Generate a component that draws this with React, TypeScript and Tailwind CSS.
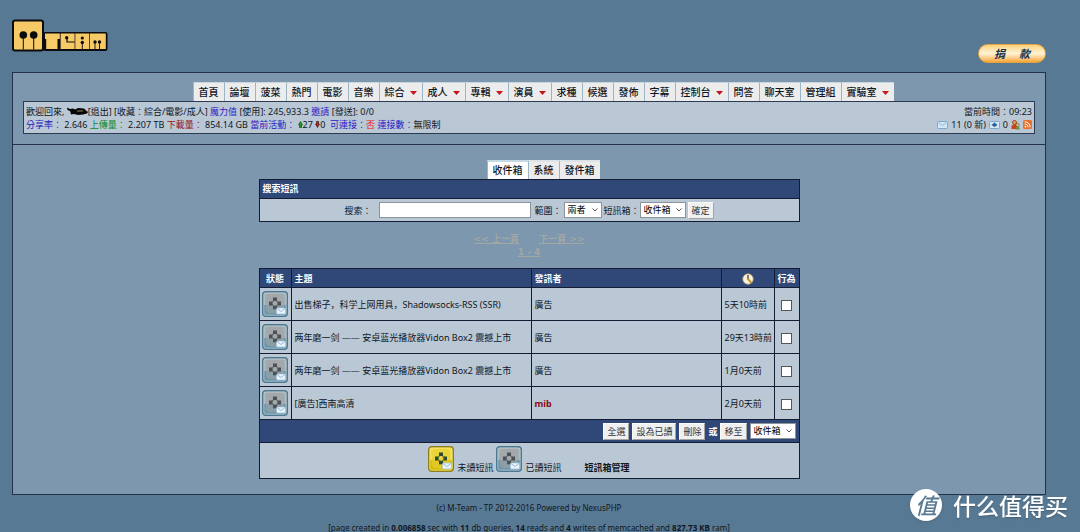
import { useState } from "react";
import type { ReactNode } from "react";

const NAV = [
  { label: "首頁" },
  { label: "論壇" },
  { label: "菠菜" },
  { label: "熱門" },
  { label: "電影" },
  { label: "音樂" },
  { label: "綜合", menu: true },
  { label: "成人", menu: true },
  { label: "專輯", menu: true },
  { label: "演員", menu: true },
  { label: "求種" },
  { label: "候選" },
  { label: "發佈" },
  { label: "字幕" },
  { label: "控制台", menu: true },
  { label: "問答" },
  { label: "聊天室" },
  { label: "管理組" },
  { label: "實驗室", menu: true },
];

const TABS = ["收件箱", "系統", "發件箱"];

const MESSAGES = [
  { id: 1, subject: "出售梯子，科学上网用具，Shadowsocks-RSS (SSR)", sender: "廣告", time: "5天10時前" },
  { id: 2, subject: "两年磨一剑 —— 安卓蓝光播放器Vidon Box2 震撼上市", sender: "廣告", time: "29天13時前" },
  { id: 3, subject: "两年磨一剑 —— 安卓蓝光播放器Vidon Box2 震撼上市", sender: "廣告", time: "1月0天前" },
  { id: 4, subject: "[廣告]西南高清", sender: "mib", staff: true, time: "2月0天前" },
];

function Logo() {
  return (
    <svg width="96" height="33" viewBox="0 0 96 33" role="img" aria-label="MTeam">
      <rect x="31" y="13" width="64.500" height="19" rx="2" fill="#0c0c0e" />
      <rect x="0" y="0.500" width="32" height="32" rx="3" fill="#0c0c0e" />
      <rect x="2" y="2.500" width="28" height="28" rx="1" fill="#f5ca67" />
      <circle cx="11.300" cy="16" r="3.800" fill="#0c0c0e" />
      <circle cx="21.700" cy="16" r="3.800" fill="#0c0c0e" />
      <path d="M11.300 16v14.500M21.700 16v14.500" stroke="#0c0c0e" strokeWidth="1" />
      <rect x="33" y="14.500" width="14.800" height="15.500" fill="#f5ca67" />
      <rect x="32" y="20" width="2.200" height="10" fill="#0c0c0e" />
      <rect x="45.500" y="20" width="2.500" height="10" fill="#0c0c0e" />
      <rect x="48.600" y="14.500" width="14" height="15.500" fill="#f5ca67" />
      <rect x="63.300" y="14.500" width="14" height="15.500" fill="#f5ca67" />
      <rect x="78" y="14.500" width="15.800" height="15.500" fill="#f5ca67" />
      <circle cx="54.700" cy="18.700" r="1.700" fill="#0c0c0e" />
      <path d="M55 18.700v4.300h7.600" fill="none" stroke="#0c0c0e" strokeWidth="1.200" />
      <circle cx="70.300" cy="19" r="1.600" fill="#0c0c0e" />
      <circle cx="70.300" cy="23.500" r="1.700" fill="#0c0c0e" />
      <path d="M70.300 23v7M83 23v7M87.500 23v7" stroke="#0c0c0e" strokeWidth="0.900" />
      <circle cx="83" cy="23" r="1.700" fill="#0c0c0e" />
      <circle cx="87.500" cy="23" r="1.700" fill="#0c0c0e" />
    </svg>
  );
}

function MailIcon({ unread = false }: { unread?: boolean }) {
  const top = unread ? "#efdc45" : "#a5b0b6";
  const bottom = unread ? "#d9bd0c" : "#6f97aa";
  const edge = unread ? "#8d7d1c" : "#4b7890";
  const ink = unread ? "#2f4a32" : "#4d5054";
  return (
    <svg
      width="26"
      height="26"
      viewBox="0 0 26 26"
      role="img"
      aria-label={unread ? "未讀" : "已讀"}
      className="inline-block align-middle"
    >
      <rect x="0.700" y="0.700" width="24.600" height="24.600" rx="3" fill={top} stroke={edge} strokeWidth="1.4" />
      <path d="M1.500 14h23v8.500a2 2 0 0 1-2 2h-19a2 2 0 0 1-2-2z" fill={bottom} />
      <rect x="4" y="3" width="18" height="19" rx="4" fill={unread ? "#e6cf35" : "#a0a3a4"} opacity="0.6" />
      <rect x="1.900" y="1.900" width="22.200" height="22.200" rx="2" fill="none" stroke="#ffffff" strokeOpacity="0.3" />
      <path d="M13 8.300L17 12.300 13 16.300 9 12.300z" fill="none" stroke={ink} strokeOpacity="0.6" strokeWidth="1.2" />
      <g fill={ink}>
        <rect x="11" y="6.500" width="4" height="3.500" />
        <rect x="7" y="10.500" width="3.500" height="4" />
        <rect x="15.500" y="10.500" width="3.500" height="4" />
        <rect x="11" y="14.800" width="4" height="3.500" />
      </g>
      <rect x="14.500" y="17" width="9" height="6" rx="1" fill="#eaf3fb" stroke="#9cc0dc" strokeWidth="0.6" />
      <path d="M15 17.500l4 3 4-3" fill="none" stroke="#8fb4d6" strokeWidth="0.9" />
    </svg>
  );
}

function ClockIcon() {
  return (
    <svg width="12" height="12" viewBox="0 0 12 12" role="img" aria-label="時間" className="inline-block align-middle">
      <circle cx="6" cy="6" r="5.300" fill="#f7f0dc" stroke="#a88f5a" strokeWidth="0.8" />
      <path d="M6 2v4l3 3.500" fill="none" stroke="#3a2c14" strokeWidth="1.2" />
      <path d="M6 6l3.500 3.500" stroke="#dd9c2a" strokeWidth="1.6" />
    </svg>
  );
}

function DownArrow() {
  return (
    <svg width="7" height="4" viewBox="0 0 7 4" className="ml-[5px] mt-px" aria-hidden="true">
      <path d="M0 0h7L3.500 4z" fill="#c4141c" />
    </svg>
  );
}

function PeerArrow({ down = false }: { down?: boolean }) {
  return (
    <svg width="5" height="7" viewBox="0 0 5 7" className="inline-block align-baseline" aria-hidden="true">
      {down ? (
        <path d="M1.500 0.500h2v2.500h1L2.500 6.500 0.500 3h1z" fill="#c81e1e" stroke="#2a0808" strokeWidth="0.6" />
      ) : (
        <path d="M2.500 0.500L4.500 4h-1v2.500h-2V4h-1z" fill="#1fa51f" stroke="#082a08" strokeWidth="0.6" />
      )}
    </svg>
  );
}

function Select({ id, options, className = "" }: { id: string; options: string[]; className?: string }) {
  return (
    <span className={"relative inline-block " + className}>
      <select
        id={id}
        className="h-4 w-full appearance-none border border-[#8b939b] bg-white pl-[3px] pr-3 text-[9px] leading-[12px] text-black"
      >
        {options.map((o) => (
          <option key={o}>{o}</option>
        ))}
      </select>
      <svg
        width="6"
        height="4"
        viewBox="0 0 6 4"
        className="pointer-events-none absolute right-1 top-1.5"
        aria-hidden="true"
      >
        <path d="M0.500 0.500L3 3l2.500-2.500" fill="none" stroke="#444" strokeWidth="0.9" />
      </svg>
    </span>
  );
}

function Button({ children, onClick }: { children: ReactNode; onClick?: () => void }) {
  return (
    <button
      type="button"
      onClick={onClick}
      className="h-[17px] border border-[#fafafa] border-b-[#a4a4a4] border-r-[#a4a4a4] bg-[#f0f0f0] px-[3px] text-[9px] leading-[13px] text-[#333]"
    >
      {children}
    </button>
  );
}

function UserBar() {
  return (
    <div className="flex justify-between border border-[#2c3b52] bg-[#bac8d5] px-[2px] pb-[2px] pt-[3px] leading-[13px]">
      <div>
        <div className="flex items-center whitespace-pre">
          <span>歡迎回來, </span>
          <svg width="21" height="9" viewBox="0 0 21 9" aria-hidden="true">
            <path
              d="M0 0.500l3 1.500 3-0.500 2 1L11 1l6 0.500 2 2 2 1.500-1 1.500-4 1-5 0.500-4-1-3 0.500-0.500-2L3 4 0.500 3z"
              fill="#050505"
            />
            <path d="M10 4h6" stroke="#8a8a52" strokeWidth="1" />
          </svg>
          <span>
            [<a href="#logout">退出</a>] [<a href="#fav">收藏：綜合/電影/成人</a>]{" "}
            <a href="#bonus" className="text-[#2a20c4]">魔力值</a> [<a href="#use">使用</a>]: 245,933.3{" "}
            <a href="#invite" className="text-[#2a20c4]">邀請</a> [<a href="#send">發送</a>]: 0/0
          </span>
        </div>
        <div className="whitespace-pre">
          <span className="text-[#2a20c4]">分享率：</span> 2.646{" "}
          <span className="text-[#0b8a22]">上傳量：</span> 2.207 TB{" "}
          <span className="text-[#96121c]">下載量：</span> 854.14 GB{" "}
          <span className="text-[#2a20c4]">當前活動：</span> <PeerArrow />27 <PeerArrow down />0{"  "}
          <span className="text-[#2a20c4]">可連接：</span>
          <span className="text-[#ee1111]">否</span> <span className="text-[#2a20c4]">連接數：</span>無限制
        </div>
      </div>
      <div className="text-right">
        <div>當前時間：09:23</div>
        <div className="flex items-center justify-end gap-[3px]">
          <svg width="11" height="8" viewBox="0 0 11 8" role="img" aria-label="收件箱">
            <rect x="0.500" y="0.500" width="10" height="7" rx="1" fill="#d3e6f6" stroke="#7ea6cc" />
            <path d="M1.500 1.500l4 3 4-3" fill="none" stroke="#8fb2d4" />
          </svg>
          <span>11 (0 新)</span>
          <svg width="11" height="8" viewBox="0 0 11 8" role="img" aria-label="發件箱">
            <rect x="0.500" y="0.500" width="10" height="7" rx="1" fill="#d3e6f6" stroke="#7ea6cc" />
            <path d="M2.500 4l3-2.500L8.500 4 5.500 6z" fill="#2f5f92" />
          </svg>
          <span>0</span>
          <svg width="9" height="10" viewBox="0 0 9 10" role="img" aria-label="好友">
            <circle cx="3.500" cy="2.500" r="2" fill="#e6a24c" stroke="#8a2c12" strokeWidth="0.8" />
            <path d="M0.500 9V6l2-1.500h2L6 6v3z" fill="#cf3d1c" />
            <circle cx="6.500" cy="5" r="1.600" fill="#f0c27c" stroke="#5e4a20" strokeWidth="0.6" />
            <path d="M4.500 9.500V8l1-1.500h2l1 1.500v1.500z" fill="#6d8c3a" />
          </svg>
          <svg width="9" height="9" viewBox="0 0 9 9" role="img" aria-label="RSS">
            <rect width="9" height="9" rx="1.500" fill="#e8702a" />
            <circle cx="2.400" cy="6.600" r="0.900" fill="#fff" />
            <path d="M1.700 3.900a3.400 3.400 0 0 1 3.400 3.400M1.700 1.800a5.500 5.500 0 0 1 5.500 5.500" fill="none" stroke="#fff" />
          </svg>
        </div>
      </div>
    </div>
  );
}

function SearchBox() {
  return (
    <div className="border border-[#141c33] bg-[#bac8d5]">
      <h2 className="border-b border-[#141c33] bg-[#2f4878] px-[3px] text-[9px] font-bold leading-[18px] text-white">
        搜索短訊
      </h2>
      <form className="flex h-[22px] items-center justify-center" onSubmit={(e) => e.preventDefault()}>
        <label htmlFor="keyword" className="mr-2">搜索：</label>
        <input id="keyword" type="text" className="h-4 w-[152px] border border-[#8b939b] bg-white px-1 text-[9px]" />
        <label htmlFor="place" className="ml-[3px] mr-0.5">範圍：</label>
        <Select id="place" options={["兩者", "標題", "內容"]} className="w-[38px]" />
        <label htmlFor="searchbox" className="ml-[2px]">短訊箱：</label>
        <Select id="searchbox" options={TABS} className="mr-0.5 w-[46px]" />
        <Button>確定</Button>
      </form>
    </div>
  );
}

function MessageTable() {
  const [checked, setChecked] = useState<number[]>([]);

  const toggle = (id: number) => {
    setChecked(checked.includes(id) ? checked.filter((c) => c !== id) : [...checked, id]);
  };

  return (
    <table className="w-full table-fixed border-collapse bg-[#bac8d5] [&_td]:border [&_td]:border-[#141c33] [&_th]:border [&_th]:border-[#141c33]">
      <colgroup>
        <col className="w-[32px]" />
        <col className="w-[240px]" />
        <col />
        <col className="w-[53px]" />
        <col className="w-[25px]" />
      </colgroup>
      <thead>
        <tr className="h-[19px] bg-[#2f4878] text-left text-white">
          <th className="text-center">狀態</th>
          <th className="px-[3px]">主題</th>
          <th className="px-[3px]">發訊者</th>
          <th className="text-center">
            <ClockIcon />
          </th>
          <th className="text-center">行為</th>
        </tr>
      </thead>
      <tbody>
        {MESSAGES.map((m) => (
          <tr key={m.id} className="h-[33px]">
            <td className="text-center">
              <MailIcon />
            </td>
            <td className="px-[3px] font-['Noto_Sans','Noto_Sans_CJK_SC',sans-serif]">
              <a href={"#message-" + m.id}>{m.subject}</a>
            </td>
            <td className="px-[3px]">
              {m.staff ? <a href="#user" className="font-bold text-[#8b0a14]">{m.sender}</a> : m.sender}
            </td>
            <td className="whitespace-nowrap px-[3px]">{m.time}</td>
            <td className="text-center">
              <input
                type="checkbox"
                aria-label={m.subject}
                checked={checked.includes(m.id)}
                onChange={() => toggle(m.id)}
                className="size-[11px] appearance-none border border-[#555] bg-white align-middle checked:bg-[#2f4878]"
              />
            </td>
          </tr>
        ))}
      </tbody>
      <tfoot>
        <tr className="h-[23px] bg-[#2f4878]">
          <td colSpan={5} className="px-[3px]">
            <div className="flex items-center justify-end gap-[3px] text-white">
              <Button onClick={() => setChecked(MESSAGES.map((m) => m.id))}>全選</Button>
              <Button>設為已讀</Button>
              <Button>刪除</Button>
              <label htmlFor="moveto" className="font-bold">或</label>
              <Button>移至</Button>
              <Select id="moveto" options={TABS} className="w-[46px]" />
            </div>
          </td>
        </tr>
        <tr className="h-[36px]">
          <td colSpan={5}>
            <div className="flex items-end justify-center gap-[3px] pb-[3px] leading-[9px]">
              <MailIcon unread />
              <span>未讀短訊</span>
              <MailIcon />
              <span>已讀短訊</span>
              <a href="#manage" className="ml-5 font-bold">短訊箱管理</a>
            </div>
          </td>
        </tr>
      </tfoot>
    </table>
  );
}

export default function App() {
  const [tab, setTab] = useState(TABS[0]);

  return (
    <div className="min-h-screen bg-[#587993] pl-3 pr-[34px] font-['Noto_Sans','Noto_Sans_CJK_TC',sans-serif] text-[9px] leading-[13px] text-[#10161e]">
      <header className="flex h-[72px] items-start justify-between pt-[19px]">
        <a href="#home">
          <Logo />
        </a>
        <a
          href="#donate"
          className="mt-[25px] flex h-[19px] w-[68px] items-center justify-center gap-[14px] rounded-full border border-[#e8a33c] bg-linear-to-b from-[#fbd27c] via-[#fff3d4] to-[#f5a52c] text-[11px] font-bold italic text-[#17324a]"
        >
          <span>捐</span>
          <span>款</span>
        </a>
      </header>

      <div className="border border-[#26304a] bg-[#7c97ae]">
        <div className="border-b border-[#26304a] px-2.5 pb-2.5 pt-[9px]">
          <nav className="flex justify-center pl-7">
            {NAV.map((n) => (
              <a
                key={n.label}
                href={"#" + n.label}
                className="flex h-[19px] items-center border-l border-t border-l-[#9db4c4] border-t-[#c9d6de] bg-[#ececec] px-[5px] text-[10px] font-medium"
              >
                {n.label}
                {n.menu && <DownArrow />}
              </a>
            ))}
          </nav>
          <UserBar />
        </div>

        <main className="mx-auto w-[541px] max-w-full py-[15px]">
          <div className="flex justify-center pl-7" role="tablist">
            {TABS.map((t) => (
              <button
                key={t}
                type="button"
                role="tab"
                aria-selected={t === tab}
                onClick={() => setTab(t)}
                className={
                  "h-[19px] border-l border-t-2 border-l-[#9db4c4] px-[5px] text-[10px] font-medium leading-[15px] " +
                  (t === tab ? "border-t-[#c4dbe6] bg-white" : "border-t-[#dde3e6] bg-[#ececec]")
                }
              >
                {t}
              </button>
            ))}
          </div>
          <SearchBox />
          <div className="pb-[9px] pt-[11px] text-center font-['DejaVu_Sans','Noto_Sans_CJK_TC',sans-serif] font-bold text-[#a3a7a4]">
            <div className="flex justify-center gap-5">
              <a href="#prev" className="underline">&lt;&lt; 上一頁</a>
              <a href="#next" className="underline">下一頁 &gt;&gt;</a>
            </div>
            <a href="#page" className="underline">1 - 4</a>
          </div>
          <MessageTable />
        </main>
      </div>

      <footer className="pt-[7px] text-center text-[8px] leading-[12px]">
        <p>(c) M-Team - TP 2012-2016 Powered by NexusPHP</p>
        <p className="pt-2">
          [page created in <b>0.006858</b> sec with <b>11</b> db queries, <b>14</b> reads and <b>4</b> writes of
          memcached and <b>827.73 KB</b> ram]
        </p>
      </footer>

      <div className="fixed bottom-[11px] right-3 flex items-center gap-[11px] text-white">
        <span className="flex size-8 items-center justify-center rounded-full bg-white text-[22px] font-medium italic leading-none text-[#587993] shadow">
          值
        </span>
        <span className="font-['Noto_Sans_CJK_SC',sans-serif] text-[23px] font-medium leading-8 text-shadow-sm">
          什么值得买
        </span>
      </div>
    </div>
  );
}
